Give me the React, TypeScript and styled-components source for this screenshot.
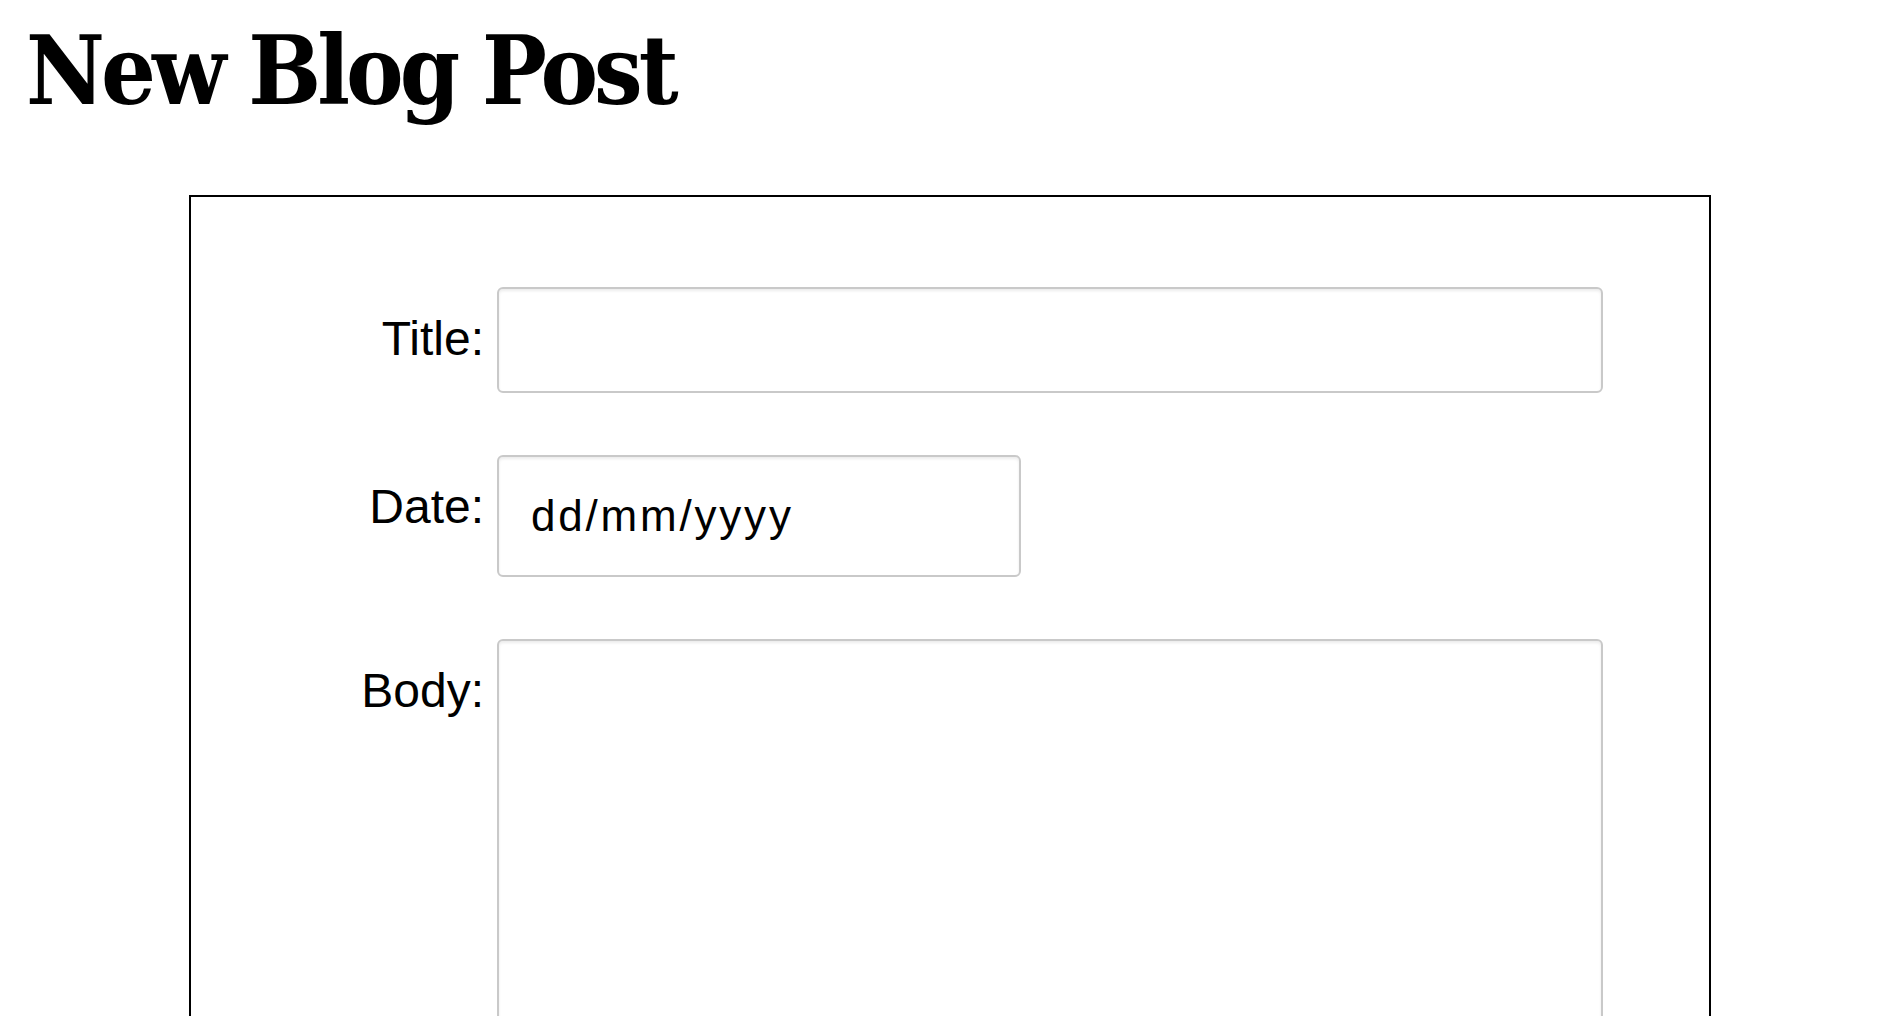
import React from 'react';
import styled, { createGlobalStyle } from 'styled-components';

const GlobalStyle = createGlobalStyle`
  html, body {
    margin: 0;
    padding: 0;
    background: #ffffff;
    overflow: hidden;
  }
  body {
    font-family: "Liberation Sans", Arial, sans-serif;
    color: #000;
  }
`;

const Page = styled.div`
  width: 1884px;
  height: 1016px;
  overflow: hidden;
`;

const Heading = styled.h1`
  margin: 0 0 67px 0;
  padding: 13px 0 0 26px;
  height: 115px;
  font-family: "DejaVu Serif Condensed", "DejaVu Serif", serif;
  font-weight: 700;
  font-size: 96px;
  line-height: 115px;
  letter-spacing: -4px;
  color: #000;
`;

const FormCard = styled.form`
  box-sizing: border-box;
  margin: 0 0 0 189px;
  width: 1522px;
  height: 900px;
  border: 2px solid #000;
  padding: 90px 0 0 0;
`;

const FieldGrid = styled.div`
  display: grid;
  grid-template-columns: 293px 1106px;
  column-gap: 13px;
  row-gap: 62px;
  align-items: start;
`;

const Label = styled.label`
  text-align: right;
  padding-top: 24px;
  font-size: 48px;
  line-height: normal;
`;

const fieldBase = `
  box-sizing: border-box;
  border: 2px solid #c9c9c9;
  border-radius: 6px;
  background: #fff;
  box-shadow: inset 0 2px 3px rgba(0, 0, 0, 0.08);
  font-family: "Liberation Sans", Arial, sans-serif;
  color: #000;
  outline: none;
  margin: 0;
`;

const TextField = styled.input<{ $width: number; $height: number }>`
  ${fieldBase}
  width: ${(p) => p.$width}px;
  height: ${(p) => p.$height}px;
  padding: 0 0 0 32px;
  font-size: 44px;
  letter-spacing: 2.8px;

  &::placeholder {
    color: #000;
    opacity: 1;
  }
`;

const BodyArea = styled.textarea`
  ${fieldBase}
  width: 1106px;
  height: 520px;
  resize: none;
  padding: 12px;
  font-size: 42px;
`;

export default function App() {
  return (
    <Page>
      <GlobalStyle />
      <Heading>New Blog Post</Heading>
      <FormCard onSubmit={(e) => e.preventDefault()}>
        <FieldGrid>
          <Label htmlFor="title">Title:</Label>
          <TextField id="title" type="text" $width={1106} $height={106} />

          <Label htmlFor="date">Date:</Label>
          <TextField id="date" type="text" placeholder="dd/mm/yyyy" $width={524} $height={122} />

          <Label htmlFor="body">Body:</Label>
          <BodyArea id="body" />
        </FieldGrid>
      </FormCard>
    </Page>
  );
}
